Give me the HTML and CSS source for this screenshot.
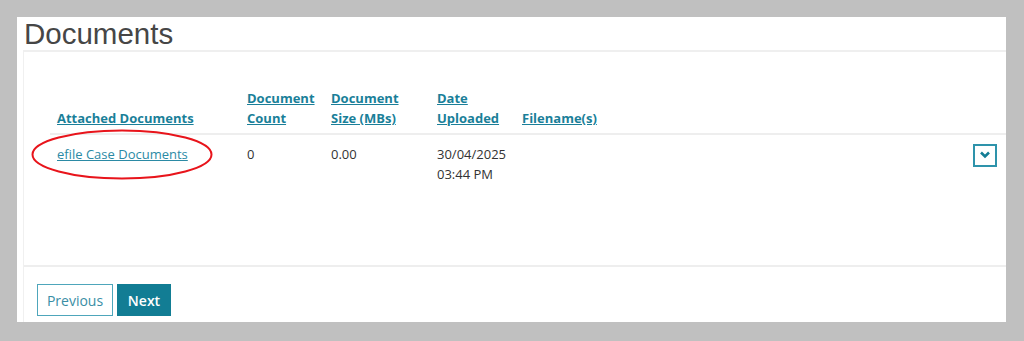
FILE: index.html
```html
<!DOCTYPE html>
<html>
<head>
  <meta charset="UTF-8">
  <title>Documents</title>
  <link rel="stylesheet" href="styles.css">
</head>
<body>
  <div class="panel">
    <div class="panel-head">
      <h1>Documents</h1>
    </div>
    <div class="panel-inner">
      <div class="panel-body">
        <table class="docs">
          <thead>
            <tr>
              <th class="col-name"><a href="#">Attached Documents</a></th>
              <th class="col-count"><a href="#">Document<br>Count</a></th>
              <th class="col-size"><a href="#">Document<br>Size (MBs)</a></th>
              <th class="col-date"><a href="#">Date<br>Uploaded</a></th>
              <th class="col-file"><a href="#">Filename(s)</a></th>
              <th class="col-act"></th>
            </tr>
          </thead>
          <tbody>
            <tr>
              <td><a href="#" class="doc-link">efile Case Documents</a></td>
              <td>0</td>
              <td>0.00</td>
              <td>30/04/2025<br>03:44 PM</td>
              <td></td>
              <td class="col-act">
                <button class="expand">
                  <svg width="12" height="8" viewBox="0 0 12 8"><path d="M2 1.5 L6 5.5 L10 1.5" fill="none" stroke="#137d95" stroke-width="2.6"/></svg>
                </button>
              </td>
            </tr>
          </tbody>
        </table>
      </div>
      <div class="panel-foot">
        <button class="btn btn-outline">Previous</button>
        <button class="btn btn-solid">Next</button>
      </div>
    </div>
    <!-- annotation -->
    <svg class="mark" width="182" height="51" viewBox="0 0 182 51">
      <ellipse cx="91" cy="25.5" rx="89.5" ry="24" fill="none" stroke="#e8141b" stroke-width="2"/>
    </svg>
  </div>
</body>
</html>
```

FILE: styles.css
```css
body {
  margin: 0;
  background: #c0c0c0;
  padding: 17px 0 0 17px;
  height: 341px;
  box-sizing: border-box;
  font-family: "Open Sans", sans-serif;
  font-size: 13px;
  color: #333;
}
.panel {
  position: relative;
  width: 989px;
  height: 305px;
  background: #fff;
  overflow: hidden;
}
.panel-head {
  margin-left: 6px;
  height: 33px;
  border-bottom: 2px solid #efefef;
}
h1 {
  margin: 0;
  padding-left: 1px;
  font-family: "Liberation Sans", Arial, sans-serif;
  font-weight: normal;
  font-size: 29.5px;
  line-height: 34px;
  color: #464646;
}
.panel-inner {
  margin-left: 6px;
  border-left: 1px solid #f0f0f0;
  height: 270px;
}
.panel-body {
  height: 213px;
  padding: 36px 0 0 26px;
  box-sizing: border-box;
}
.docs {
  width: 100%;
  border-collapse: collapse;
}
.docs th {
  text-align: left;
  vertical-align: bottom;
  padding: 0 7px 5px;
  line-height: 20px;
  border-bottom: 2px solid #eee;
}
.docs th a {
  color: #1a7f99;
  font-weight: bold;
}
.docs td {
  vertical-align: top;
  padding: 9px 7px 0;
  line-height: 20px;
}
.col-name { width: 176px; }
.col-count { width: 70px; }
.col-size { width: 92px; }
.col-date { width: 71px; }
.docs .col-act {
  text-align: right;
  padding-right: 9px;
}
.doc-link {
  color: #2b8aa5;
}
.expand {
  width: 24px;
  height: 23px;
  margin-top: -1px;
  padding: 0;
  border: 2px solid #2e93ab;
  background: #fff;
  display: inline-flex;
  align-items: center;
  justify-content: center;
}
.panel-foot {
  border-top: 2px solid #eee;
  padding: 17px 0 0 13px;
  display: flex;
  gap: 4px;
}
.btn {
  height: 32px;
  font-family: "Open Sans", sans-serif;
  font-size: 14px;
  padding: 0;
}
.btn-outline {
  width: 76px;
  background: #fff;
  border: 1px solid #4ea6bb;
  color: #3a8ea5;
}
.btn-solid {
  width: 54px;
  background: #127d94;
  border: 1px solid #127d94;
  color: #fff;
  font-weight: 600;
}
.mark {
  position: absolute;
  left: 14px;
  top: 112px;
}
```
